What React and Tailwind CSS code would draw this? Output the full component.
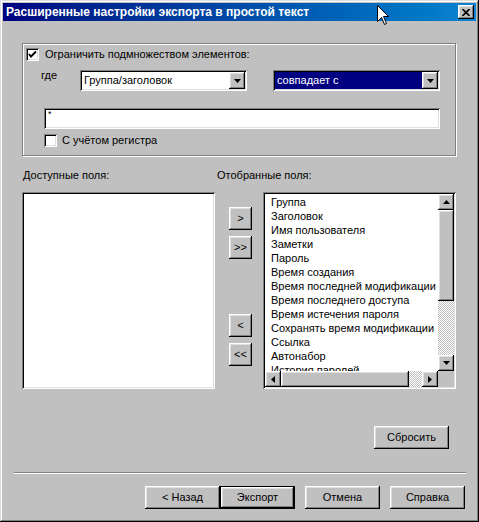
const raised = "shadow-[inset_-1px_-1px_#000,inset_1px_1px_#fff,inset_-2px_-2px_#808080,inset_2px_2px_#dfdfdf]";
const sunken = "shadow-[inset_1px_1px_#808080,inset_-1px_-1px_#fff,inset_2px_2px_#000,inset_-2px_-2px_#dfdfdf]";

function Tri({ dir }) {
  if (dir === "down") return <svg width="7" height="4" viewBox="0 0 7 4"><polygon points="0,0 7,0 3.5,4" fill="#000" /></svg>;
  if (dir === "up") return <svg width="7" height="4" viewBox="0 0 7 4"><polygon points="0,4 7,4 3.5,0" fill="#000" /></svg>;
  if (dir === "left") return <svg width="4" height="7" viewBox="0 0 4 7"><polygon points="4,0 4,7 0,3.5" fill="#000" /></svg>;
  return <svg width="4" height="7" viewBox="0 0 4 7"><polygon points="0,0 0,7 4,3.5" fill="#000" /></svg>;
}

function Btn({ children, className = "", def }) {
  return (
    <div className={`bg-[#c0c0c0] ${def ? "border border-black" : ""} ${className}`}>
      <div className={`w-full h-full flex items-center justify-center ${raised}`}>{children}</div>
    </div>
  );
}

function Check({ checked, className = "" }) {
  return (
    <div className={`w-[13px] h-[13px] bg-white shrink-0 ${sunken} ${className}`}>
      {checked && (
        <svg width="13" height="13" viewBox="0 0 13 13">
          <polyline points="3,6 5,8.5 10,3.5" fill="none" stroke="#000" strokeWidth="1.9" />
        </svg>
      )}
    </div>
  );
}

function Combo({ text, selected, className = "" }) {
  return (
    <div className={`h-[21px] w-[167px] bg-white p-[2px] flex ${sunken} ${className}`}>
      <div className={`flex-1 flex items-center pl-[2px] ${selected ? "bg-[#000080] text-white" : ""}`}>{text}</div>
      <Btn className="w-[16px] h-[17px]"><Tri dir="down" /></Btn>
    </div>
  );
}

const fields = [
  "Группа",
  "Заголовок",
  "Имя пользователя",
  "Заметки",
  "Пароль",
  "Время создания",
  "Время последней модификации пароля",
  "Время последнего доступа",
  "Время истечения пароля",
  "Сохранять время модификации",
  "Ссылка",
  "Автонабор",
  "История паролей",
];

export default function App() {
  return (
    <div className={`relative w-[479px] h-[522px] bg-[#c0c0c0] text-black text-[11px] leading-[13px] font-['Liberation_Sans',Arial,sans-serif] overflow-hidden shadow-[inset_-1px_-1px_#000,inset_1px_1px_#dfdfdf,inset_-2px_-2px_#808080,inset_2px_2px_#fff]`}>
      {/* title bar */}
      <div className="mx-[3px] mt-[3px] h-[18px] flex items-center bg-linear-to-r from-[#000080] to-[#1084d0] pl-[3px] pr-[2px]">
        <span className="text-white font-bold text-[12px] flex-1 whitespace-nowrap">Расширенные настройки экспорта в простой текст</span>
        <Btn className="w-[16px] h-[14px]">
          <svg width="8" height="7" viewBox="0 0 8 7">
            <path d="M0.5 0 L7.5 7 M7.5 0 L0.5 7" stroke="#000" strokeWidth="1.6" />
          </svg>
        </Btn>
      </div>

      {/* group box */}
      <div className="mt-[22px] ml-[22px] w-[434px] h-[113px] border border-[#808080] shadow-[1px_1px_0_#fff,inset_1px_1px_0_#fff]">
        <div className="flex items-center mt-[4px] ml-[3px]">
          <Check checked />
          <span className="ml-[6px]">Ограничить подмножеством элементов:</span>
        </div>
        <div className="flex mt-[9px]">
          <span className="ml-[18px] w-[39px] mt-[-1px]">где</span>
          <Combo text="Группа/заголовок" />
          <Combo text="совпадает с" selected className="ml-[26px]" />
        </div>
        <div className={`mt-[17px] ml-[21px] w-[396px] h-[21px] bg-white pl-[4px] pt-[2px] text-[9px] leading-[9px] ${sunken}`}>*</div>
        <div className="flex items-center mt-[5px] ml-[21px]">
          <Check />
          <span className="ml-[5px]">С учётом регистра</span>
        </div>
      </div>

      {/* labels */}
      <div className="flex mt-[13px]">
        <span className="ml-[23px] w-[194px]">Доступные поля:</span>
        <span>Отобранные поля:</span>
      </div>

      {/* lists */}
      <div className="flex mt-[10px]">
        <div className={`ml-[22px] w-[193px] h-[197px] bg-white ${sunken}`} />
        <div className="ml-[14px] mt-[15px] flex flex-col w-[23px]">
          <Btn className="h-[23px]">&gt;</Btn>
          <Btn className="h-[23px] mt-[6px]">&gt;&gt;</Btn>
          <Btn className="h-[23px] mt-[55px]">&lt;</Btn>
          <Btn className="h-[23px] mt-[6px]">&lt;&lt;</Btn>
        </div>
        <div className={`ml-[11px] w-[193px] h-[197px] bg-white p-[2px] flex flex-col ${sunken}`}>
          <div className="flex flex-1 min-h-0">
            <div className="flex-1 overflow-hidden pl-[6px] pt-[1px] leading-[14px] whitespace-nowrap">
              {fields.map((f) => (
                <div key={f}>{f}</div>
              ))}
            </div>
            <div className="w-[16px] flex flex-col">
              <Btn className="h-[16px]"><Tri dir="up" /></Btn>
              <Btn className="h-[91px]" />
              <div className="flex-1 bg-[repeating-conic-gradient(#c0c0c0_0%_25%,#ffffff_0%_50%)] bg-[length:2px_2px]" />
              <Btn className="h-[16px]"><Tri dir="down" /></Btn>
            </div>
          </div>
          <div className="h-[16px] flex">
            <Btn className="w-[16px]"><Tri dir="left" /></Btn>
            <Btn className="w-[128px]" />
            <div className="flex-1 bg-[repeating-conic-gradient(#c0c0c0_0%_25%,#ffffff_0%_50%)] bg-[length:2px_2px]" />
            <Btn className="w-[16px]"><Tri dir="right" /></Btn>
            <div className="w-[16px] bg-[#c0c0c0]" />
          </div>
        </div>
      </div>

      {/* reset */}
      <Btn className="mt-[37px] ml-[374px] w-[75px] h-[23px]">Сбросить</Btn>

      {/* separator */}
      <div className="mt-[23px] ml-[14px] w-[452px] h-[2px] border-t border-[#808080] border-b border-b-white" />

      {/* bottom buttons */}
      <div className="flex mt-[12px] ml-[145px]">
        <Btn className="w-[75px] h-[23px]">&lt; Назад</Btn>
        <Btn def className="w-[75px] h-[23px]">Экспорт</Btn>
        <Btn className="w-[75px] h-[23px] ml-[10px]">Отмена</Btn>
        <Btn className="w-[75px] h-[23px] ml-[10px]">Справка</Btn>
      </div>

      {/* mouse cursor */}
      <svg className="absolute left-[377px] top-[5px]" width="13" height="21" viewBox="0 0 13 21">
        <polygon points="0.5,0.5 0.5,16.5 4.5,12.5 7.5,19.5 9.5,18.5 6.5,11.5 11.5,11.5" fill="#fff" stroke="#000" strokeWidth="1" />
      </svg>
    </div>
  );
}
